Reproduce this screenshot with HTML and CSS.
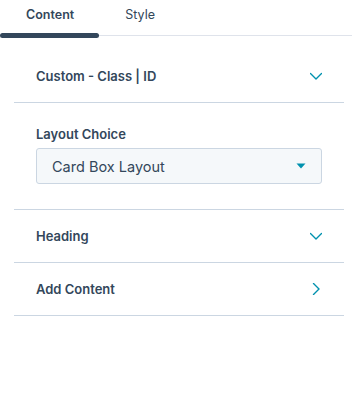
FILE: index.html
```html
<!DOCTYPE html>
<html lang="en">
<head>
    <meta charset="UTF-8">
    <title>Module Settings</title>
    <link rel="stylesheet" href="styles.css">
</head>
<body>
    <div class="tabs">
        <div class="tab active">Content</div>
        <div class="tab">Style</div>
    </div>
    <div class="panel">
        <div class="section">
            <div class="section-header">
                <span>Custom - Class | ID</span>
                <svg class="chevron" width="12" height="12" viewBox="0 0 12 12"><path d="M0.5 3.5l5.5 5.5 5.5-5.5" fill="none" stroke="#0091ae" stroke-width="1.4" stroke-linecap="round" stroke-linejoin="round"/></svg>
            </div>
        </div>
        <div class="section field-section">
            <label class="field-label">Layout Choice</label>
            <div class="select">
                <span>Card Box Layout</span>
                <svg width="10" height="6" viewBox="0 0 10 6"><path d="M0.5 0.5h9L5 5.5z" fill="#0091ae"/></svg>
            </div>
        </div>
        <div class="section">
            <div class="section-header">
                <span>Heading</span>
                <svg class="chevron" width="12" height="12" viewBox="0 0 12 12"><path d="M0.5 3.5l5.5 5.5 5.5-5.5" fill="none" stroke="#0091ae" stroke-width="1.4" stroke-linecap="round" stroke-linejoin="round"/></svg>
            </div>
        </div>
        <div class="section last">
            <div class="section-header">
                <span>Add Content</span>
                <svg class="chevron" width="12" height="12" viewBox="0 0 12 12"><path d="M3.5 0.5l5.5 5.5-5.5 5.5" fill="none" stroke="#0091ae" stroke-width="1.4" stroke-linecap="round" stroke-linejoin="round"/></svg>
            </div>
        </div>
    </div>
</body>
</html>
```

FILE: styles.css
```css
body, html {
    margin: 0;
    padding: 0;
    background: #ffffff;
    font-family: 'Inter', sans-serif;
    color: #33475b;
}
.tabs {
    display: flex;
    height: 35px;
    border-bottom: 1px solid #dfe3eb;
}
.tab {
    position: relative;
    padding: 0 25px 0 26px;
    font-size: 12.5px;
    line-height: 29px;
}
.tab.active {
    font-weight: 600;
}
.tab.active::after {
    content: '';
    position: absolute;
    left: 0;
    right: 0;
    bottom: -3px;
    height: 5px;
    border-radius: 2.5px;
    background-color: #33475b;
}
.panel {
    margin: 14px 8px 0 14px;
}
.section {
    border-bottom: 1px solid #cbd6e2;
}
.section-header {
    display: flex;
    align-items: center;
    justify-content: space-between;
    height: 52px;
    padding: 0 22px 0 22px;
    font-size: 13px;
    font-weight: 600;
}
.field-section {
    padding: 23px 22px 25px 22px;
}
.field-label {
    display: block;
    font-size: 13px;
    font-weight: 600;
    line-height: 16px;
    margin-bottom: 6px;
}
.select {
    display: flex;
    align-items: center;
    justify-content: space-between;
    height: 34px;
    padding: 0 15px 0 15px;
    background-color: #f5f8fa;
    border: 1px solid #cbd6e2;
    border-radius: 3px;
    font-size: 14.5px;
}
```
